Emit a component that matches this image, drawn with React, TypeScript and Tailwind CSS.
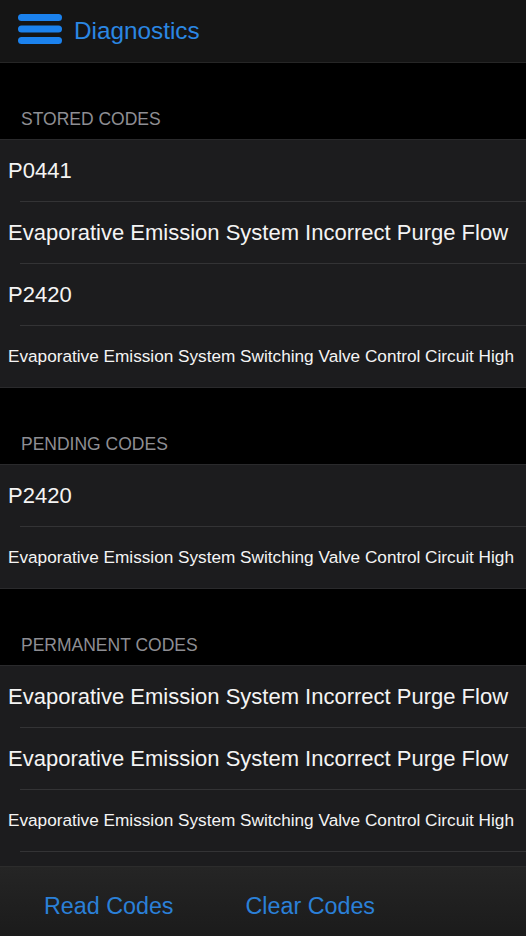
const sections = [
  {
    title: "STORED CODES",
    rows: [
      { text: "P0441", small: false },
      { text: "Evaporative Emission System Incorrect Purge Flow", small: false },
      { text: "P2420", small: false },
      { text: "Evaporative Emission System Switching Valve Control Circuit High", small: true },
    ],
  },
  {
    title: "PENDING CODES",
    rows: [
      { text: "P2420", small: false },
      { text: "Evaporative Emission System Switching Valve Control Circuit High", small: true },
    ],
  },
  {
    title: "PERMANENT CODES",
    rows: [
      { text: "Evaporative Emission System Incorrect Purge Flow", small: false },
      { text: "Evaporative Emission System Incorrect Purge Flow", small: false },
      { text: "Evaporative Emission System Switching Valve Control Circuit High", small: true },
      { text: "", small: false },
    ],
  },
];

const MenuIcon = () => (
  <svg width="44" height="30" viewBox="0 0 44 30" className="block mb-[5px]">
    <rect x="0" y="0" width="44" height="7" rx="3.5" fill="#1b82ee" />
    <rect x="0" y="11.5" width="44" height="7" rx="3.5" fill="#1b82ee" />
    <rect x="0" y="23" width="44" height="7" rx="3.5" fill="#1b82ee" />
  </svg>
);

const App = () => {
  return (
    <div className="w-[526px] h-[936px] bg-black overflow-hidden flex flex-col font-['Liberation_Sans',Arial,sans-serif]">
      <header className="h-[63px] shrink-0 bg-[#151515] border-b border-[#262626] flex items-center pl-[18px]">
        <MenuIcon />
        <span className="ml-[12px] text-[24.3px] text-[#2b87e3]">Diagnostics</span>
      </header>

      <main className="flex-1 overflow-hidden">
        {sections.map((section) => (
          <section key={section.title}>
            <div className="h-[76px] flex items-end pl-[21px] pb-[7px] text-[17.5px] text-[#8e8e93]">
              {section.title}
            </div>
            <div className="border-t border-[#2a2a2c] bg-[#1c1c1e]">
              {section.rows.map((row, i) => (
                <div
                  key={i}
                  className={
                    i === section.rows.length - 1
                      ? "h-[62px] flex items-center border-b border-[#2a2a2c]"
                      : "h-[62px] flex flex-col"
                  }
                >
                  <div className="flex-1 flex items-center pl-[8px]">
                    <span
                      className={
                        row.small
                          ? "text-[17.2px] text-[#f4f4f4] whitespace-nowrap"
                          : "text-[22px] text-[#f4f4f4] whitespace-nowrap"
                      }
                    >
                      {row.text}
                    </span>
                  </div>
                  {i !== section.rows.length - 1 && (
                    <div className="h-px ml-[20px] bg-[#333335]" />
                  )}
                </div>
              ))}
            </div>
          </section>
        ))}
      </main>

      <footer className="h-[70px] shrink-0 bg-gradient-to-b from-[#252525] to-[#1b1b1b] border-t border-[#2c2c2c] flex items-center pt-[9px]">
        <button className="ml-[44px] text-[23.3px] text-[#2b80d8]">Read Codes</button>
        <button className="ml-[72px] text-[23.3px] text-[#2b80d8]">Clear Codes</button>
      </footer>
    </div>
  );
};

export default App;
